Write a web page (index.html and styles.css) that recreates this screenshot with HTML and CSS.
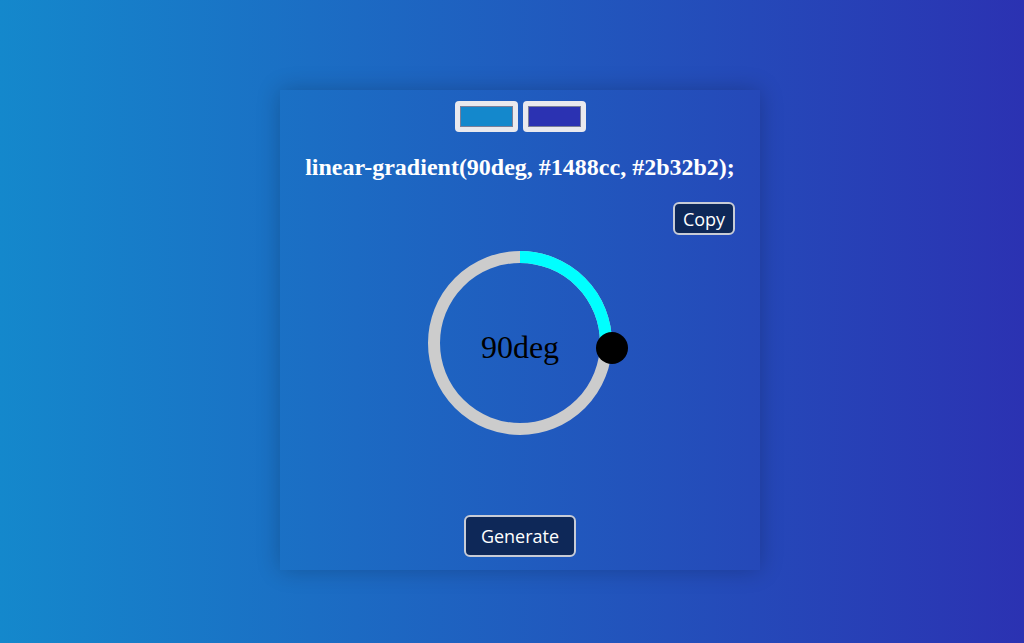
FILE: index.html
```html
<!DOCTYPE html>
<html>
<head>
<meta charset="utf-8">
<link rel="stylesheet" href="styles.css">
</head>
<body>
<main class="page">
  <section class="card">
    <div class="swatches">
      <div class="swatch"><span class="swatch-fill fill-a"></span></div>
      <div class="swatch"><span class="swatch-fill fill-b"></span></div>
    </div>
    <h1 class="code">linear-gradient(90deg, #1488cc, #2b32b2);</h1>
    <div class="copy-row"><button class="btn btn-copy">Copy</button></div>
    <div class="dial">
      <svg class="dial-svg" width="184" height="184" viewBox="0 0 184 184">
        <circle cx="92" cy="92" r="86" fill="none" stroke="#cccccc" stroke-width="12"/>
        <path d="M92 6 A86 86 0 0 1 178 92" fill="none" stroke="#00ffff" stroke-width="12"/>
      </svg>
      <span class="dial-label">90deg</span>
      <span class="knob"></span>
    </div>
    <div class="gen-row"><button class="btn btn-gen">Generate</button></div>
  </section>
</main>
</body>
</html>
```
FILE: styles.css
```css
html, body {
  margin: 0;
  padding: 0;
}
body {
  background: linear-gradient(90deg, #1488cc, #2b32b2);
  font-family: "Liberation Serif", "Times New Roman", serif;
}
.page {
  height: 643px;
  box-sizing: border-box;
  padding-top: 17px;
  padding-left: 16px;
  display: flex;
  align-items: center;
  justify-content: center;
}
.card {
  width: 480px;
  height: 480px;
  box-sizing: border-box;
  padding: 11px 25px 13px;
  box-shadow: 0 0 22px rgba(0, 0, 0, 0.22);
  display: flex;
  flex-direction: column;
  align-items: center;
}
.swatches {
  display: flex;
  gap: 5px;
}
.swatch {
  width: 63px;
  height: 31px;
  box-sizing: border-box;
  padding: 5px;
  background: #e9e9ee;
  border-radius: 4px;
  display: flex;
}
.swatch-fill {
  flex: 1;
  border: 1px solid #7a7f99;
}
.fill-a { background: #1488cc; }
.fill-b { background: #2b32b2; }
.code {
  margin: 22px 0 0;
  font-size: 24px;
  line-height: 26px;
  font-weight: bold;
  color: #ffffff;
  white-space: nowrap;
}
.copy-row {
  align-self: stretch;
  display: flex;
  justify-content: flex-end;
  margin-top: 22px;
}
.btn {
  background: #0e2858;
  color: #ffffff;
  border: 2px solid #c8ccd6;
  border-radius: 6px;
  font-family: "Open Sans", "Noto Sans", sans-serif;
  font-size: 18px;
  padding: 0;
  cursor: pointer;
}
.btn-copy {
  width: 62px;
  height: 33px;
}
.dial {
  position: relative;
  width: 184px;
  height: 184px;
  margin-top: 16px;
  display: flex;
  align-items: center;
  justify-content: center;
}
.dial-svg {
  position: absolute;
  left: 0;
  top: 0;
}
.dial-label {
  position: relative;
  font-size: 32px;
  color: #000000;
  margin-top: 8px;
}
.knob {
  position: absolute;
  left: 168px;
  top: 81px;
  width: 32px;
  height: 32px;
  border-radius: 50%;
  background: #000000;
}
.gen-row {
  margin-top: 80px;
}
.btn-gen {
  width: 112px;
  height: 42px;
}
```
